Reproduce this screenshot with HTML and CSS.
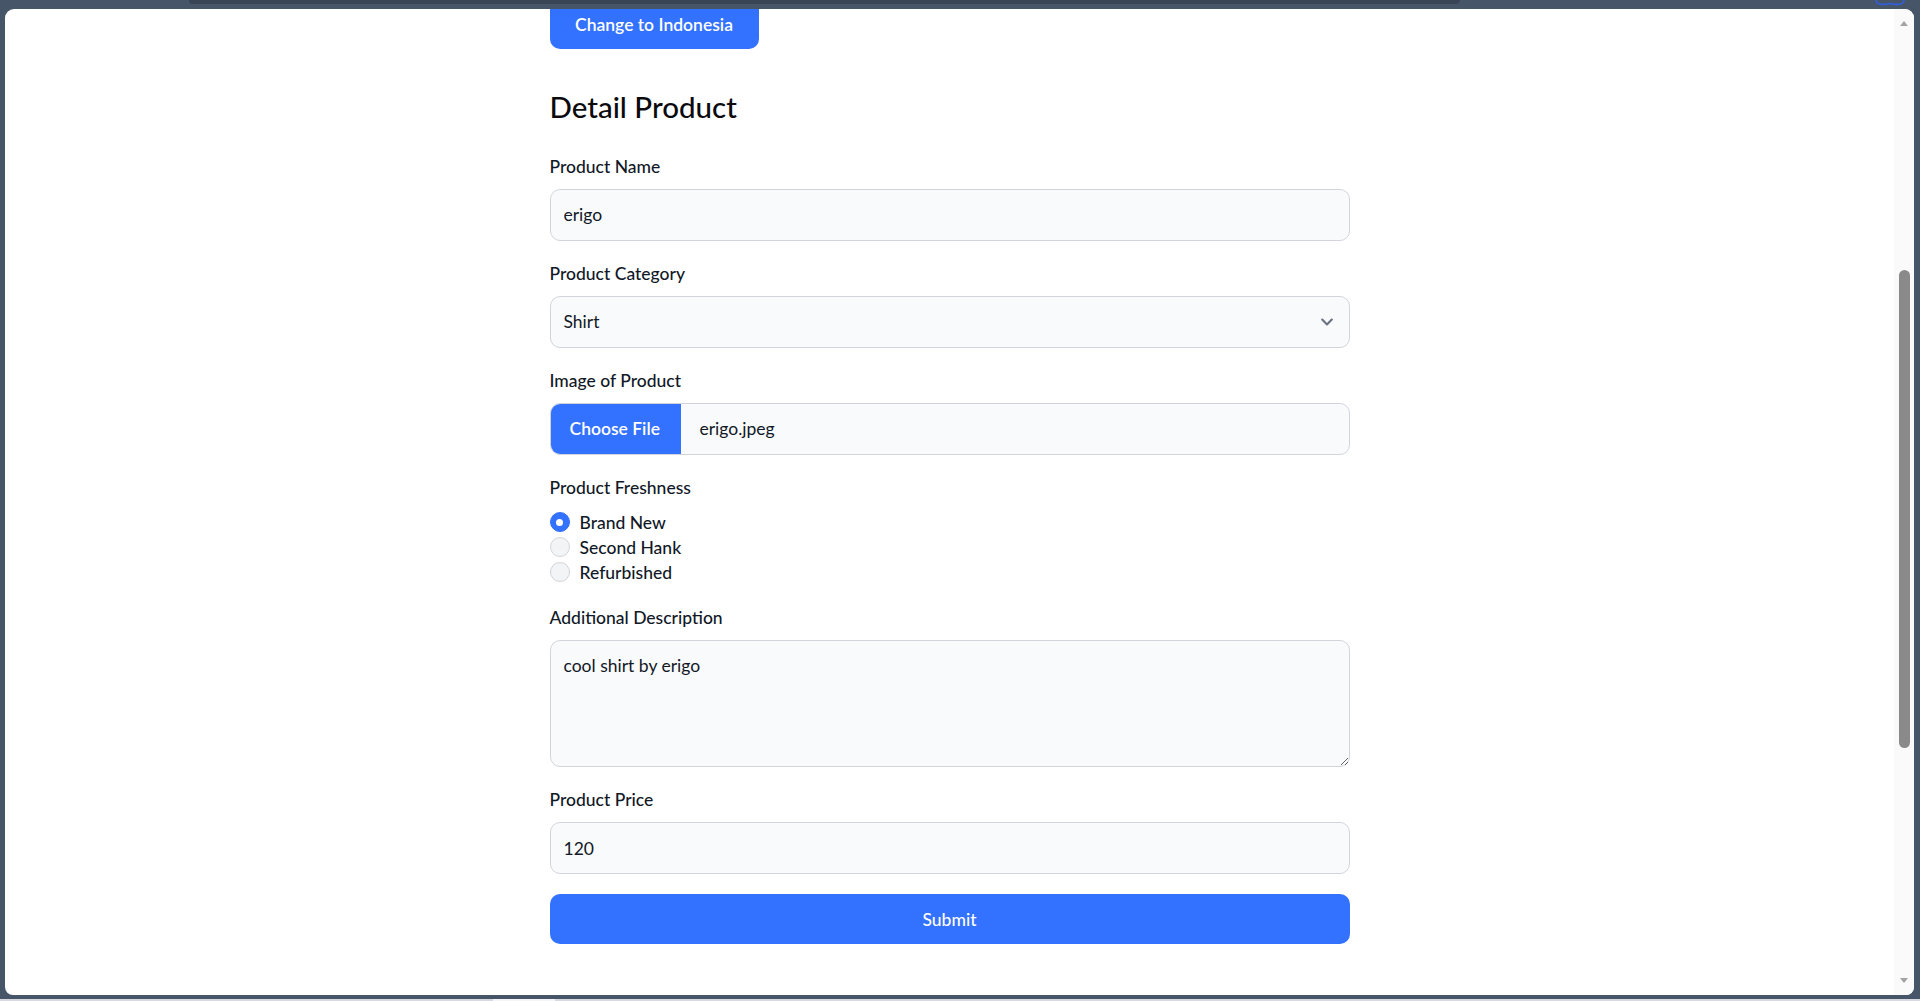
FILE: index.html
```html
<!DOCTYPE html>
<html lang="en">
<head>
<meta charset="utf-8">
<title>Detail Product</title>
<link rel="stylesheet" href="styles.css">
</head>
<body class="screen">
  <div class="frame-top">
    <div class="tab-strip"></div>
    <svg class="corner-icon" width="32" height="6" viewBox="0 0 32 6"><path d="M2 0 C2 5 9 5 16 3.5 C23 5 30 5 30 0" fill="none" stroke="#2f5fe0" stroke-width="1.6"/></svg>
  </div>
  <div class="window">
    <main class="viewport">
      <div class="column">
        <button class="btn btn-lang" type="button">Change to Indonesia</button>
        <h1 class="title">Detail Product</h1>
        <form class="form">
          <div class="field">
            <label class="label">Product Name</label>
            <input class="control" type="text" value="erigo">
          </div>
          <div class="field">
            <label class="label">Product Category</label>
            <div class="control select">
              <span>Shirt</span>
              <svg class="chevron" width="12" height="8" viewBox="0 0 10 6"><path d="m1 1 4 4 4-4" fill="none" stroke="#6b7280" stroke-width="1.8" stroke-linecap="round" stroke-linejoin="round"/></svg>
            </div>
          </div>
          <div class="field">
            <label class="label">Image of Product</label>
            <div class="control file">
              <span class="file-btn">Choose File</span>
              <span class="file-name">erigo.jpeg</span>
            </div>
          </div>
          <div class="field">
            <label class="label">Product Freshness</label>
            <div class="radios">
              <div class="radio-row"><span class="radio checked"></span><span class="radio-label">Brand New</span></div>
              <div class="radio-row"><span class="radio"></span><span class="radio-label">Second Hank</span></div>
              <div class="radio-row"><span class="radio"></span><span class="radio-label">Refurbished</span></div>
            </div>
          </div>
          <div class="field">
            <label class="label">Additional Description</label>
            <textarea class="control textarea" rows="4">cool shirt by erigo</textarea>
          </div>
          <div class="field">
            <label class="label">Product Price</label>
            <input class="control" type="text" value="120">
          </div>
          <button class="btn btn-submit" type="button">Submit</button>
        </form>
      </div>
    </main>
    <div class="scrollbar">
      <span class="arrow-up"></span>
      <span class="thumb"></span>
      <span class="track-fill"></span>
      <span class="arrow-down"></span>
    </div>
  </div>
  <div class="frame-bottom">
    <span class="strip-mark"></span>
  </div>
</body>
</html>
```
FILE: styles.css
```css
* { box-sizing: border-box; }

html, body { margin: 0; padding: 0; }

.screen {
  width: 1920px;
  height: 1001px;
  overflow: hidden;
  background: #475569;
  display: flex;
  flex-direction: column;
  font-family: "Lato", "Noto Sans", sans-serif;
  color: #111827;
}

.frame-top {
  height: 9px;
  flex: none;
  display: flex;
  align-items: flex-start;
}

.tab-strip {
  margin-left: 189px;
  width: 1271px;
  height: 4px;
  background: #394456;
  border-radius: 0 0 6px 6px;
}

.corner-icon {
  margin-left: auto;
  margin-right: 14px;
  display: block;
}

.window {
  flex: none;
  height: 986px;
  margin: 0 6px 0 5px;
  background: #ffffff;
  border-radius: 9px 9px 8px 8px;
  overflow: hidden;
  display: flex;
}

.viewport {
  flex: 1;
  overflow: hidden;
}

.column {
  width: 800px;
  margin: 0 auto;
  display: flex;
  flex-direction: column;
  align-items: flex-start;
}

.btn {
  font-family: inherit;
  border: 0;
  background: #3371ff;
  color: #ffffff;
  font-size: 17.5px;
  font-weight: 600;
  line-height: 25px;
  border-radius: 10px;
  padding: 12.5px 25px;
  cursor: pointer;
}

.btn-lang {
  margin-top: -10px;
  width: 209px;
  padding: 12.5px 0;
}

.title {
  margin: 37.5px 0 0;
  font-size: 29.5px;
  line-height: 40px;
  font-weight: 500;
  color: #0b0b0f;
}

.form {
  margin-top: 27px;
  width: 100%;
  display: flex;
  flex-direction: column;
}

.field {
  display: flex;
  flex-direction: column;
  margin-bottom: 20px;
}

.label {
  display: block;
  font-size: 17.5px;
  line-height: 25px;
  font-weight: 500;
  color: #111827;
  margin-bottom: 10px;
}

.control {
  width: 100%;
  height: 52px;
  font-family: inherit;
  font-size: 17.5px;
  line-height: 25px;
  color: #111827;
  background: #f9fafb;
  border: 1px solid #d1d5db;
  border-radius: 10px;
  padding: 12.5px 13px;
  outline: none;
}

.select {
  display: flex;
  align-items: center;
  justify-content: space-between;
}

.chevron {
  display: block;
  margin-right: 3px;
}

.file {
  display: flex;
  align-items: stretch;
  padding: 0;
  overflow: hidden;
}

.file-btn {
  display: flex;
  align-items: center;
  background: #3371ff;
  color: #ffffff;
  font-weight: 600;
  padding: 0 20px 0 20px;
  width: 131px;
  margin: -1px 0 -1px -1px;
}

.file-name {
  display: flex;
  align-items: center;
  padding-left: 19px;
}

.radios {
  display: flex;
  flex-direction: column;
}

.radio-row {
  display: flex;
  align-items: center;
  height: 25px;
}

.radio {
  width: 20px;
  height: 20px;
  border-radius: 50%;
  background: #f3f4f6;
  border: 1px solid #d1d5db;
  flex: none;
}

.radio.checked {
  background: #3371ff;
  border-color: #3371ff;
  display: flex;
  align-items: center;
  justify-content: center;
}

.radio.checked::after {
  content: "";
  width: 7px;
  height: 7px;
  border-radius: 50%;
  background: #ffffff;
}

.radio-label {
  margin-left: 10px;
  font-size: 17.5px;
  line-height: 25px;
  font-weight: 500;
  color: #111827;
}

.textarea {
  height: 127.5px;
  resize: vertical;
  display: block;
}

.btn-submit {
  width: 100%;
  margin-top: 0;
  font-weight: 500;
  height: 50px;
}

.scrollbar {
  width: 20px;
  flex: none;
  background: #fafafa;
  display: flex;
  flex-direction: column;
  align-items: center;
}

.arrow-up {
  margin-top: 12px;
  width: 0;
  height: 0;
  border-left: 4px solid transparent;
  border-right: 4px solid transparent;
  border-bottom: 5px solid #a3a3a3;
}

.thumb {
  margin-top: 244px;
  width: 11px;
  height: 478px;
  background: #8a8a8a;
  border-radius: 6px;
  margin-left: 1px;
}

.track-fill { flex: 1; }

.arrow-down {
  margin-bottom: 12px;
  width: 0;
  height: 0;
  border-left: 4px solid transparent;
  border-right: 4px solid transparent;
  border-top: 5px solid #a3a3a3;
}

.frame-bottom {
  flex: none;
  margin-top: 4px;
  height: 2px;
  background: #d7dbe1;
  display: flex;
}

.strip-mark {
  margin-left: 493px;
  width: 62px;
  background: #f4f5f7;
}
```
